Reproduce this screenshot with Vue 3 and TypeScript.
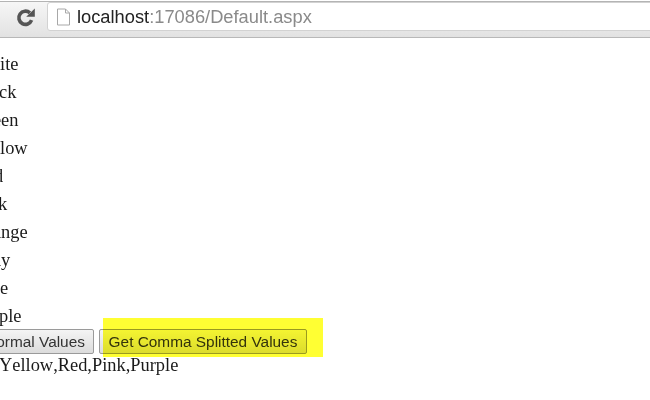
<script setup lang="ts">
const colours: string[] = ['White', 'Black', 'Green', 'Yellow', 'Red', 'Pink', 'Orange', 'Gray', 'Blue', 'Purple']
</script>

<template>
  <div class="browser">
    <header class="toolbar">
      <svg class="reload" width="20" height="20" viewBox="0 0 20 20" aria-hidden="true">
        <path d="M15.6 12.2A6.6 6.6 0 1 1 13.9 4.9" fill="none" stroke="#555" stroke-width="3.6" />
        <path d="M10.2 8.8H18.8V.4z" fill="#555" />
      </svg>
      <div class="omnibox">
        <svg class="file" width="15" height="18" viewBox="0 0 15 18" aria-hidden="true">
          <path d="M1.5 1H9.5L13.5 5V17H1.5Z M9.5 1V5H13.5" fill="#fff" stroke="#a8a8a8" stroke-width="1" />
        </svg>
        <span class="url"><span class="host">localhost</span>:17086/Default.aspx</span>
      </div>
    </header>
    <main class="page">
      <div v-for="c in colours" :key="c" class="row">{{ c }}</div>
      <div class="actions">
        <button class="btn normal">Get Normal Values</button>
        <button class="btn comma">
          Get Comma Splitted Values
          <span class="marker"></span>
        </button>
      </div>
      <div class="result">Yellow,Red,Pink,Purple</div>
    </main>
  </div>
</template>

<style scoped>
.browser {
  width: 650px;
  height: 400px;
  overflow: hidden;
  background: #fff;
  font-family: "Liberation Serif", serif;
  filter: blur(0.35px);
}
.toolbar {
  height: 37px;
  box-sizing: border-box;
  display: flex;
  align-items: flex-start;
  padding: 0 0 0 16px;
  gap: 11px;
  margin-top: 1px;
  background: linear-gradient(#f6f6f6, #e2e2e2);
  border-top: 1px solid #b4b4b4;
  border-bottom: 1px solid #b8b8b8;
}
.reload {
  margin-top: 6px;
  flex: none;
}
.omnibox {
  flex: 1;
  height: 29px;
  margin-right: -8px;
  box-sizing: border-box;
  display: flex;
  align-items: center;
  gap: 6px;
  padding-left: 8px;
  background: #fff;
  border: 1px solid #d2d2d2;
  border-radius: 3px;
  font-family: "Liberation Sans", sans-serif;
  font-size: 18.3px;
  color: #8a8a8a;
}
.file {
  flex: none;
}
.host {
  color: #222;
}
.page {
  margin-left: -26.5px;
  padding-top: 12px;
  font-size: 18.4px;
  font-kerning: none;
  color: #1a1a1a;
  white-space: nowrap;
}
.row {
  height: 28px;
  line-height: 28px;
}
.actions {
  display: flex;
  gap: 5px;
  height: 25px;
  margin-top: -1px;
  margin-left: -26.5px;
}
.btn {
  position: relative;
  height: 25px;
  padding: 0;
  box-sizing: border-box;
  border: 1px solid #9a9a9a;
  border-radius: 2px;
  background: linear-gradient(#f4f4f4, #dcdcdc);
  font-family: "Liberation Sans", sans-serif;
  font-size: 15.4px;
  color: #333;
}
.normal {
  width: 147px;
}
.comma {
  width: 208px;
}
.marker {
  position: absolute;
  left: 3px;
  top: -12px;
  width: 220px;
  height: 39px;
  background: #ffff33;
  mix-blend-mode: multiply;
}
.result {
  margin-left: 25.5px;
  line-height: 22px;
}
</style>
